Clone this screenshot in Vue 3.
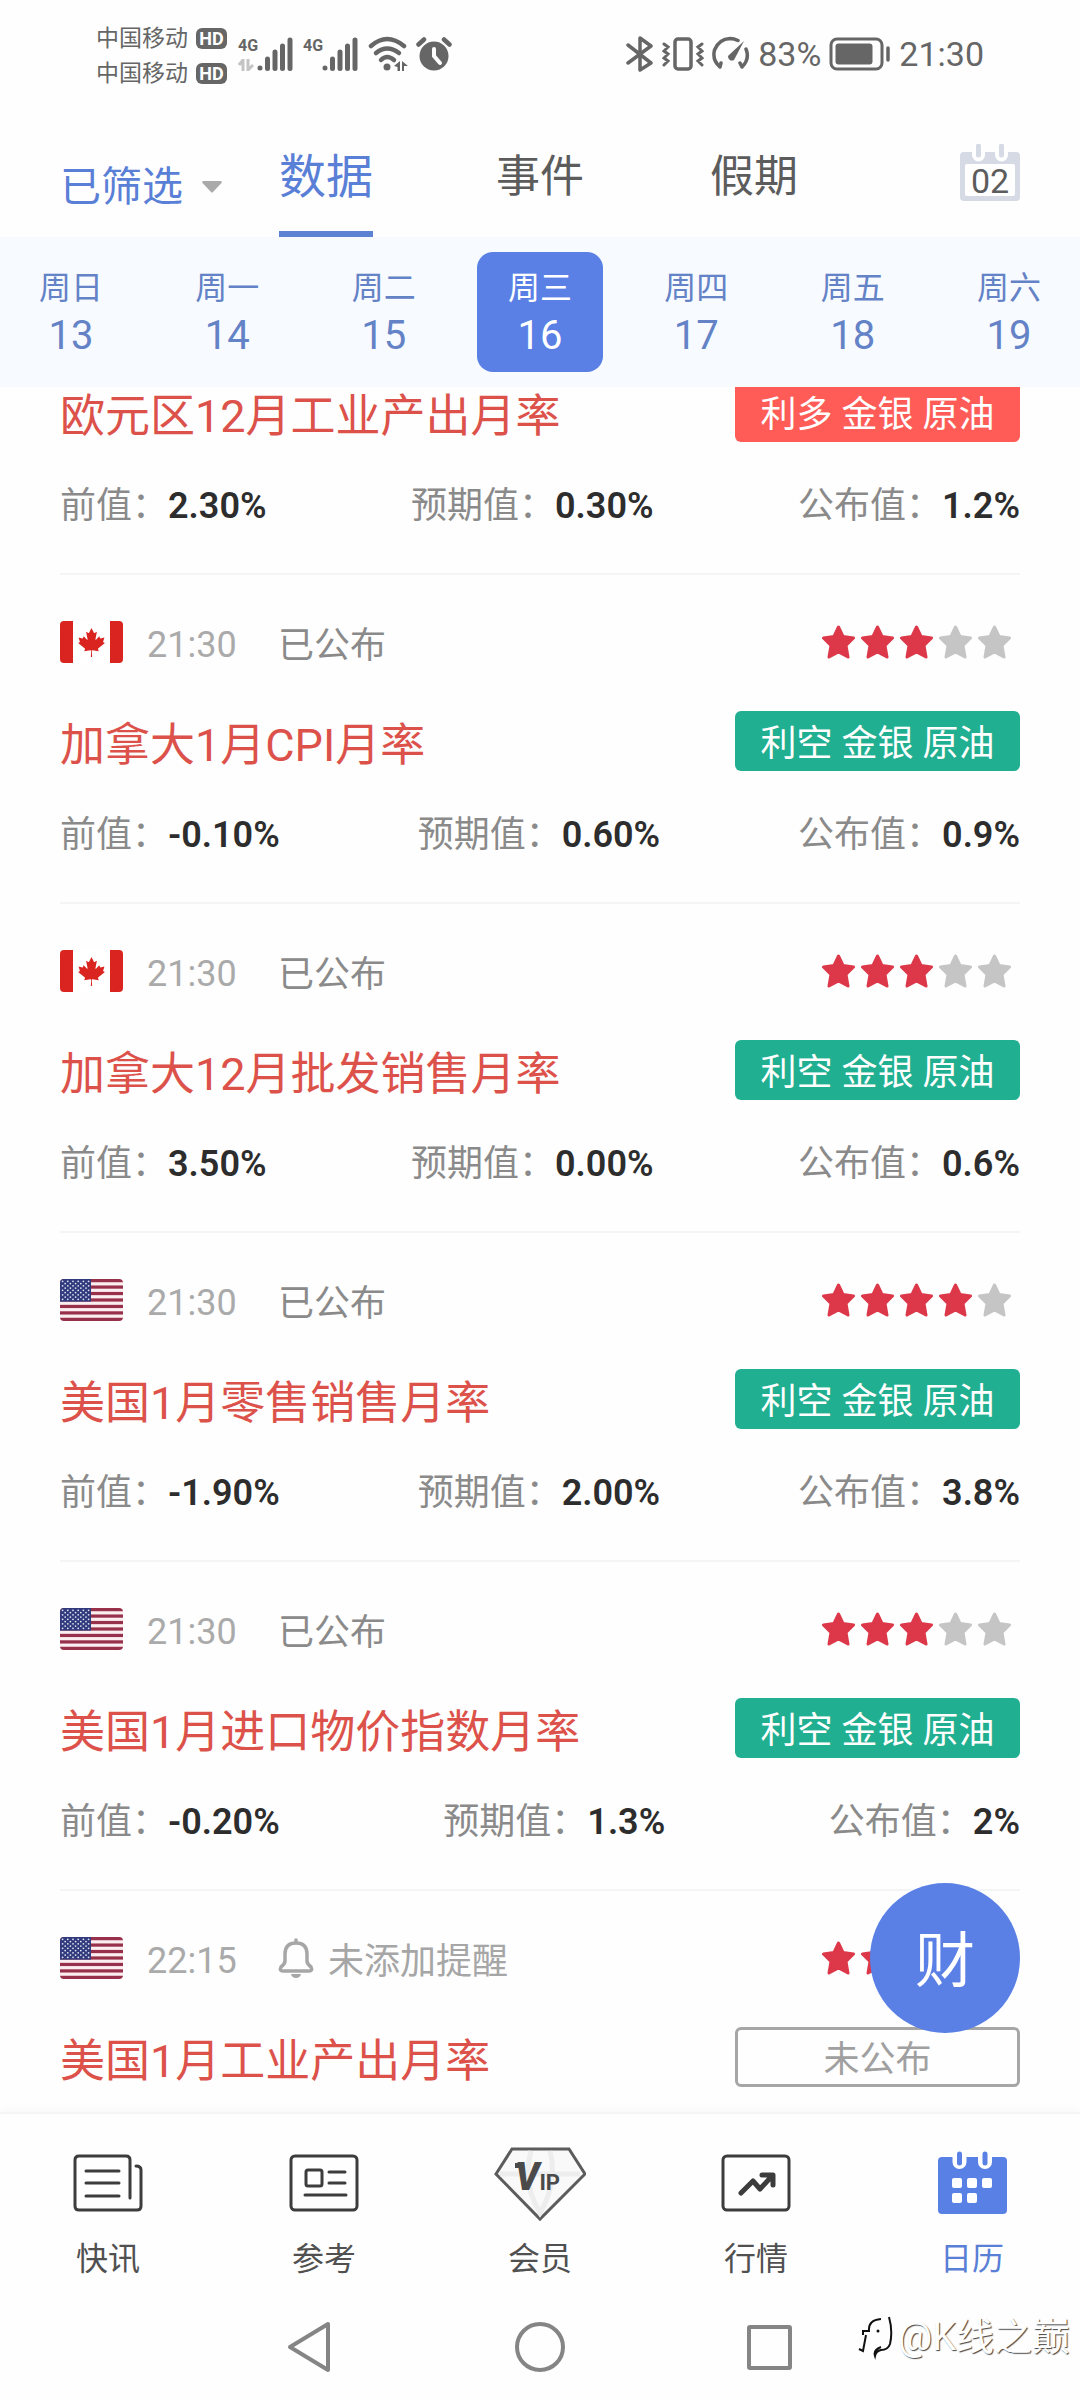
<template>
  <div class="app">
    <div class="status-bar">
      <div class="status-left">
        <div class="carriers">
          <div v-for="n in 2" :key="n" class="carrier">
            <span>中国移动</span>
            <span class="hd">HD</span>
          </div>
        </div>
        <div v-for="n in 2" :key="n" class="signal">
          <div class="network">
            <span>4G</span>
            <svg width="16" height="12" viewBox="0 0 16 12" :class="{ hidden: n === 2 }">
              <path d="M5 12V1L1 6M10 0v11l5-5" fill="none" stroke="#c4c4c4" stroke-width="3" />
            </svg>
          </div>
          <svg width="36" height="34" viewBox="0 0 36 34">
            <path d="M3 31v0M10.500 22v9.500M18 15v16.500M25.500 9v22.500M33 3v28.500" stroke="#666" stroke-width="5" stroke-linecap="round" />
          </svg>
        </div>
        <svg class="wifi" width="42" height="36" viewBox="0 0 42 36">
          <g fill="none" stroke="#666" stroke-width="4.500" stroke-linecap="round">
            <path d="M3 10Q19 -4 36 10" />
            <path d="M8 17Q19 8 31 17" />
            <path d="M13 24Q19 18 26 24" />
          </g>
          <circle cx="19" cy="31" r="3.500" fill="#666" />
          <path d="M26 30l6-5v10h-2.500v-4zM34 25l6 5h-4v5h-2z" fill="#666" />
        </svg>
        <svg width="36" height="36" viewBox="0 0 36 36">
          <circle cx="18" cy="20" r="14.500" fill="#666" />
          <path d="M2.500 8.500L8 3.500M33.500 8.500L28 3.500" stroke="#666" stroke-width="4.500" stroke-linecap="round" />
          <path d="M18 13v7l6 7" fill="none" stroke="#fff" stroke-width="4" stroke-linecap="round" />
        </svg>
      </div>
      <div class="status-right">
        <svg width="28" height="36" viewBox="0 0 28 36">
          <path d="M2 9l23 18-11 7V2l11 8L2 27" fill="none" stroke="#666" stroke-width="3.500" stroke-linejoin="round" stroke-linecap="round" />
        </svg>
        <svg width="42" height="36" viewBox="0 0 42 36">
          <g fill="none" stroke="#666" stroke-width="3.500" stroke-linecap="round">
            <rect x="13" y="3" width="16" height="30" rx="3" />
            <path d="M2 8l4 3-4 4 4 3-4 4 4 3-4 4M40 8l-4 3 4 4-4 3 4 4-4 3 4 4" stroke-width="3" />
          </g>
        </svg>
        <svg width="38" height="36" viewBox="0 0 38 36">
          <path d="M8 31Q0 24 2.500 14Q7 3 18 2.500Q22 2.500 26 4.500M34 13Q38 23 30 31M8 31l1-4M30 31l-2-4" fill="none" stroke="#666" stroke-width="3.500" stroke-linecap="round" />
          <path d="M32 5L22 24a4 4 0 0 1-6-4z" fill="#666" />
        </svg>
        <span>83%</span>
        <svg width="62" height="34" viewBox="0 0 62 34">
          <rect x="2" y="2" width="51" height="30" rx="6" fill="none" stroke="#666" stroke-width="3" />
          <rect x="6.500" y="6.500" width="37" height="21" rx="3" fill="#666" />
          <path d="M59 11v12" stroke="#666" stroke-width="3.500" stroke-linecap="round" />
        </svg>
        <span>21:30</span>
      </div>
    </div>

    <header class="header">
      <button class="filter">
        已筛选
        <svg width="22" height="14" viewBox="0 0 22 14">
          <path d="M2 1h18q1.500 1 .5 2L12 12q-1 1-2 0L1.500 3q-1-1 .5-2z" fill="#aaa" />
        </svg>
      </button>
      <nav class="tabs">
        <button
          v-for="tab in tabs"
          :key="tab"
          class="tab"
          :class="{ active: tab === activeTab }"
          @click="activeTab = tab"
        >{{ tab }}</button>
      </nav>
      <button class="today">
        <svg width="60" height="58" viewBox="0 0 60 58">
          <rect y="8" width="60" height="49" rx="4" fill="#d5dae5" />
          <rect x="5" y="20" width="50" height="32" rx="2" fill="#fff" />
          <path d="M18.500 6v5M41.500 6v5" stroke="#fff" stroke-width="13" stroke-linecap="round" />
          <path d="M18.500 2v9M41.500 2v9" stroke="#d5dae5" stroke-width="5" stroke-linecap="round" />
        </svg>
        <span class="today-number">02</span>
      </button>
    </header>

    <div class="week">
      <button
        v-for="day in days"
        :key="day.date"
        class="day"
        :class="{ selected: day.date === selectedDate }"
        @click="selectedDate = day.date"
      >
        <span class="day-name">{{ day.name }}</span>
        <span class="day-date">{{ day.date }}</span>
      </button>
    </div>

    <main ref="list" class="list">
      <article v-for="(item, index) in items" :key="index" class="item">
        <div v-if="item.time" class="meta">
          <svg v-if="item.country === 'ca'" class="flag" width="63" height="42" viewBox="0 0 63 42">
            <rect width="63" height="42" fill="#fff" />
            <path d="M0 0h13v42H0zM50 0h13v42H50z" fill="#d9241f" />
            <path
              transform="translate(31.5 21.5) scale(.0072)"
              fill="#d9241f"
              d="m-90 2030 45-863a95 95 0 0 0-111-98l-859 151 116-320a65 65 0 0 0-20-73l-941-762 212-99a65 65 0 0 0 34-79l-186-572 542 115a65 65 0 0 0 73-38l105-247 423 454a65 65 0 0 0 111-57l-204-1052 327 189a65 65 0 0 0 91-27l332-652 332 652a65 65 0 0 0 91 27l327-189-204 1052a65 65 0 0 0 111 57l423-454 105 247a65 65 0 0 0 73 38l542-115-186 572a65 65 0 0 0 34 79l212 99-941 762a65 65 0 0 0-20 73l116 320-859-151a95 95 0 0 0-111 98l45 863z"
            />
          </svg>
          <svg v-else class="flag" width="63" height="42" viewBox="0 0 63 42">
            <rect width="63" height="42" fill="#fbeef0" />
            <rect v-for="n in 7" :key="n" :y="(n - 1) * 6.46" width="63" height="3.23" fill="#97304a" />
            <rect width="31" height="22.600" fill="#313a7c" />
            <g fill="#dfe2f2">
              <circle v-for="star in flagStars" :key="star.id" :cx="star.x" :cy="star.y" r=".9" />
            </g>
          </svg>
          <span class="time">{{ item.time }}</span>
          <span v-if="item.published" class="state">已公布</span>
          <button v-else class="remind">
            <svg width="36" height="42" viewBox="0 0 36 42">
              <path d="M18 3v2M7 17Q7 6 18 6T29 17v7q0 3 4 6 2 4-2 4H5q-4 0-2-4 4-3 4-6z" fill="none" stroke="#a6a6a6" stroke-width="3.500" stroke-linecap="round" />
              <path d="M13 37h10q-1 4-5 4t-5-4z" fill="#a6a6a6" />
            </svg>
            未添加提醒
          </button>
          <div class="stars">
            <svg v-for="n in 5" :key="n" width="33" height="34" viewBox="0 0 33 34">
              <path
                d="M16.500 2l4.500 9.500 10.500 1.500-7.500 7.500 2 11.500-9.500-5-9.500 5 2-11.500L1.500 13l10.500-1.500z"
                :fill="n <= item.stars ? '#dc3849' : '#c5c5c5'"
                :stroke="n <= item.stars ? '#dc3849' : '#c5c5c5'"
                stroke-width="3"
                stroke-linejoin="round"
              />
            </svg>
          </div>
        </div>
        <div class="headline">
          <h2 class="title">{{ item.title }}</h2>
          <span class="tag" :class="item.effect">{{ item.tag }}</span>
        </div>
        <dl v-if="item.values" class="values">
          <div v-for="(value, i) in item.values" :key="i" class="value">
            <dt>{{ valueLabels[i] }}：</dt>
            <dd>{{ value }}</dd>
          </div>
        </dl>
      </article>
    </main>

    <div class="bottom">
      <button class="fab">财</button>
      <nav class="bottom-nav">
        <a href="#" class="nav-item">
          <svg width="92" height="76" viewBox="0 0 92 76" class="line-icon">
            <path d="M68 51V13q0-4-4-4H17q-4 0-4 4v46q0 4 4 4h58q4 0 4-4V23q0-4-5-4M24 24h33M24 36h33M24 49h33" />
          </svg>
          <span>快讯</span>
        </a>
        <a href="#" class="nav-item">
          <svg width="92" height="76" viewBox="0 0 92 76" class="line-icon">
            <rect x="13" y="9" width="66" height="54" rx="4" />
            <rect x="28" y="23" width="16" height="16" rx="2" />
            <path d="M51 25h16M51 36h16M27 48h41" />
          </svg>
          <span>参考</span>
        </a>
        <a href="#" class="nav-item">
          <svg width="92" height="76" viewBox="0 0 92 76">
            <path d="M18 2h57l16 25-45 45L2 27z" fill="#f9f9f9" stroke="#5c5c5c" stroke-width="3" />
            <path d="M37 4Q28 36 46 66Q64 36 56 4M6 27h80" fill="none" stroke="#ededed" stroke-width="5" />
            <path d="M21 16h8v5h-8z" fill="#4a4a4a" />
            <text x="21" y="43"><tspan class="vip-v">V</tspan><tspan class="vip-ip">IP</tspan></text>
          </svg>
          <span>会员</span>
        </a>
        <a href="#" class="nav-item">
          <svg width="92" height="76" viewBox="0 0 92 76" class="line-icon">
            <rect x="13" y="9" width="66" height="54" rx="4" />
            <path class="trend" d="M31 46l12-12 7 8 12-13M52 28h11v10" />
          </svg>
          <span>行情</span>
        </a>
        <a href="#" class="nav-item current">
          <svg width="92" height="76" viewBox="0 0 92 76">
            <rect x="12" y="10" width="69" height="57" rx="4" fill="#5880e5" />
            <path d="M33.500 6v9M59 6v9" stroke="#fff" stroke-width="14" stroke-linecap="round" />
            <path d="M33.500 7v9M59 7v9" stroke="#5880e5" stroke-width="5" stroke-linecap="round" />
            <g fill="#fff">
              <rect x="26" y="31" width="10" height="10" rx="2" />
              <rect x="41" y="31" width="10" height="10" rx="2" />
              <rect x="56" y="31" width="10" height="10" rx="2" />
              <rect x="26" y="46" width="10" height="10" rx="2" />
              <rect x="41" y="46" width="10" height="10" rx="2" />
            </g>
          </svg>
          <span>日历</span>
        </a>
      </nav>
      <div class="system-nav">
        <button aria-label="返回">
          <svg width="52" height="52" viewBox="0 0 52 52">
            <path d="M6 26L44 3v46z" />
          </svg>
        </button>
        <button aria-label="主页">
          <svg width="52" height="52" viewBox="0 0 52 52">
            <circle cx="26" cy="26" r="23" />
          </svg>
        </button>
        <button aria-label="最近">
          <svg width="52" height="52" viewBox="0 0 52 52">
            <rect x="5" y="6" width="41" height="41" rx="1" />
          </svg>
        </button>
        <div class="watermark">
          <svg width="36" height="46" viewBox="0 0 36 46">
            <path d="M5 21v-4h6q-1-11 12-12M8 21l-3 16-4-2M31 3q4 14 1 27-2 6-9 6-5 1-6 6-2-6 6-9" fill="none" stroke="#111" stroke-width="2" />
            <circle cx="20" cy="17" r="1.500" fill="#111" />
          </svg>
          <span>@K线之巅</span>
        </div>
      </div>
    </div>
  </div>
</template>

<script setup>
import { ref, onMounted } from 'vue';

const tabs = ['数据', '事件', '假期'];
const activeTab = ref('数据');

const days = [
  { name: '周日', date: 13 },
  { name: '周一', date: 14 },
  { name: '周二', date: 15 },
  { name: '周三', date: 16 },
  { name: '周四', date: 17 },
  { name: '周五', date: 18 },
  { name: '周六', date: 19 },
];
const selectedDate = ref(16);

const valueLabels = ['前值', '预期值', '公布值'];

const items = ref([
  { title: '欧元区12月工业产出月率', tag: '利多 金银 原油', effect: 'up', values: ['2.30%', '0.30%', '1.2%'] },
  { country: 'ca', time: '21:30', published: true, stars: 3, title: '加拿大1月CPI月率', tag: '利空 金银 原油', effect: 'down', values: ['-0.10%', '0.60%', '0.9%'] },
  { country: 'ca', time: '21:30', published: true, stars: 3, title: '加拿大12月批发销售月率', tag: '利空 金银 原油', effect: 'down', values: ['3.50%', '0.00%', '0.6%'] },
  { country: 'us', time: '21:30', published: true, stars: 4, title: '美国1月零售销售月率', tag: '利空 金银 原油', effect: 'down', values: ['-1.90%', '2.00%', '3.8%'] },
  { country: 'us', time: '21:30', published: true, stars: 3, title: '美国1月进口物价指数月率', tag: '利空 金银 原油', effect: 'down', values: ['-0.20%', '1.3%', '2%'] },
  { country: 'us', time: '22:15', published: false, stars: 3, title: '美国1月工业产出月率', tag: '未公布', effect: 'pending' },
]);

// nine staggered rows of stars in the flag's canton
const flagStars = [];
for (let row = 0; row < 9; row++) {
  const count = row % 2 === 0 ? 6 : 5;
  for (let col = 0; col < count; col++) {
    flagStars.push({
      id: `${row}-${col}`,
      x: 2.6 + col * 5.2 + (row % 2) * 2.6,
      y: 2.3 + row * 2.25,
    });
  }
}

const list = ref(null);

onMounted(() => {
  // the first item starts out partly under the week bar
  list.value.scrollTop = 51;
});
</script>

<style>
body {
  margin: 0;
  background: #fff;
}
</style>

<style scoped>
.app {
  display: flex;
  flex-direction: column;
  height: 100vh;
  background: #fefefe;
  color: #5c5c5c;
  font-family: Roboto, "Noto Sans CJK SC", sans-serif;
}

button {
  padding: 0;
  border: none;
  background: none;
  color: inherit;
  font: inherit;
  cursor: pointer;
}

svg {
  display: block;
  flex-shrink: 0;
}

.status-bar {
  display: flex;
  flex-shrink: 0;
  align-items: center;
  justify-content: space-between;
  box-sizing: border-box;
  height: 108px;
  padding: 0 96px;
  color: #666;
}

.status-left,
.status-right {
  display: flex;
  align-items: center;
}

.status-right {
  gap: 8px;
  font-size: 34px;
}

.carriers {
  display: flex;
  flex-direction: column;
  margin-right: 11px;
  padding-top: 4px;
}

.carrier {
  display: flex;
  align-items: center;
  gap: 8px;
  font-size: 23px;
  line-height: 35px;
}

.hd {
  width: 31px;
  border-radius: 6px;
  background: #666;
  color: #fff;
  font-size: 18px;
  font-weight: 700;
  line-height: 21px;
  text-align: center;
}

.signal {
  display: flex;
  align-items: flex-end;
  margin-right: 10px;
}

.network {
  display: flex;
  flex-direction: column;
  gap: 4px;
  width: 19px;
  font-size: 16px;
  font-weight: 700;
  line-height: 18px;
}

.hidden {
  visibility: hidden;
}

.wifi {
  margin-right: 6px;
}

.header {
  display: grid;
  flex-shrink: 0;
  grid-template-columns: 1fr auto 1fr;
  align-items: center;
  height: 129px;
  padding: 0 60px;
}

.filter {
  display: flex;
  align-items: center;
  justify-self: start;
  gap: 18px;
  padding-top: 28px;
  color: #5a7fd6;
  font-size: 41px;
  line-height: 48px;
}

.tabs {
  display: flex;
  gap: 120px;
  height: 100%;
}

.tab {
  width: 94px;
  border-top: 6px solid transparent;
  border-bottom: 6px solid transparent;
  font-size: 44px;
  white-space: nowrap;
}

.tab.active {
  border-bottom-color: #5d82d4;
  color: #5a7fd6;
  font-size: 47px;
}

.today {
  position: relative;
  justify-self: end;
}

.today-number {
  position: absolute;
  top: 20px;
  left: 0;
  width: 100%;
  font-size: 34px;
  line-height: 34px;
}

.week {
  display: flex;
  flex-shrink: 0;
  justify-content: space-between;
  padding: 15px 8px;
  background: #f7faff;
}

.day {
  display: flex;
  flex-direction: column;
  align-items: center;
  width: 126px;
  padding: 12px 0;
  border-radius: 16px;
  color: #6482c6;
}

.day.selected {
  background: #5a80e6;
  color: #fff;
}

.day-name {
  font-size: 32px;
  line-height: 48px;
}

.day-date {
  font-size: 40px;
  line-height: 48px;
}

.list {
  flex: 1;
  min-height: 0;
  padding: 0 60px;
  overflow-y: auto;
  scrollbar-width: none;
}

.item {
  padding: 46px 0;
  border-bottom: 2px solid #f4f4f4;
}

.item:last-child {
  border-bottom: none;
}

.meta {
  display: flex;
  align-items: center;
  height: 42px;
  margin-bottom: 48px;
  font-size: 36px;
}

.flag {
  border-radius: 4px;
}

.time {
  width: 107px;
  margin-left: 24px;
  padding-top: 5px;
  color: #aaa;
}

.state {
  color: #8a8a8a;
}

.time + .state,
.time + .remind {
  margin-left: 24px;
}

.remind {
  display: flex;
  align-items: center;
  gap: 14px;
  color: #a6a6a6;
}

.stars {
  display: flex;
  gap: 6px;
  margin-left: auto;
  padding-right: 9px;
}

.headline {
  display: flex;
  align-items: center;
  justify-content: space-between;
  height: 60px;
}

.title {
  margin: 0;
  color: #dc524b;
  font-size: 45px;
  font-weight: 400;
}

.tag {
  box-sizing: border-box;
  width: 285px;
  padding-top: 6px;
  border-radius: 6px;
  color: #fff;
  font-size: 36px;
  line-height: 54px;
  text-align: center;
}

.tag.up {
  background: #ff5c58;
}

.tag.down {
  background: #21af91;
}

.tag.pending {
  border: 3px solid #a6a6a6;
  color: #a0a0a0;
  line-height: 48px;
}

.values {
  display: flex;
  justify-content: space-between;
  margin: 43px 0 0;
  font-size: 36px;
  line-height: 42px;
}

.value {
  display: flex;
}

.value dt {
  color: #8a8a8a;
}

.value dd {
  margin: 0;
  color: #2d2d2d;
  font-weight: 600;
}

.bottom {
  position: relative;
  flex-shrink: 0;
  border-top: 2px solid #f5f5f5;
  background: #fefefe;
  box-shadow: 0 -4px 8px rgba(0, 0, 0, 0.02);
}

.fab {
  position: absolute;
  right: 60px;
  bottom: 100%;
  box-sizing: border-box;
  width: 150px;
  height: 150px;
  margin-bottom: 81px;
  padding-bottom: 6px;
  border-radius: 50%;
  background: #5a80e6;
  color: #fff;
  font-size: 60px;
}

.bottom-nav {
  display: flex;
  padding: 33px 0 15px;
}

.nav-item {
  display: flex;
  flex: 1;
  flex-direction: column;
  align-items: center;
  gap: 16px;
  color: #505050;
  font-size: 32px;
  line-height: 40px;
  text-decoration: none;
}

.nav-item.current {
  color: #5a7fd6;
}

.line-icon {
  fill: none;
  stroke: #3c3c3c;
  stroke-width: 3;
  stroke-linecap: round;
  stroke-linejoin: round;
}

.trend {
  stroke-width: 5;
}

.vip-v {
  fill: #4a4a4a;
  font-size: 38px;
  font-style: italic;
  font-weight: 900;
}

.vip-ip {
  fill: #4a4a4a;
  font-size: 22px;
  font-weight: 700;
}

.system-nav {
  position: relative;
  display: flex;
  align-items: center;
  justify-content: center;
  gap: 178px;
  height: 106px;
}

.system-nav button svg {
  fill: none;
  stroke: #858585;
  stroke-width: 4;
  stroke-linejoin: round;
}

.watermark {
  position: absolute;
  top: 20px;
  right: 10px;
  display: flex;
  align-items: center;
  gap: 4px;
  color: #fff;
  font-size: 38px;
  line-height: 46px;
  text-shadow: 1px 1px 1px #444;
}
</style>
